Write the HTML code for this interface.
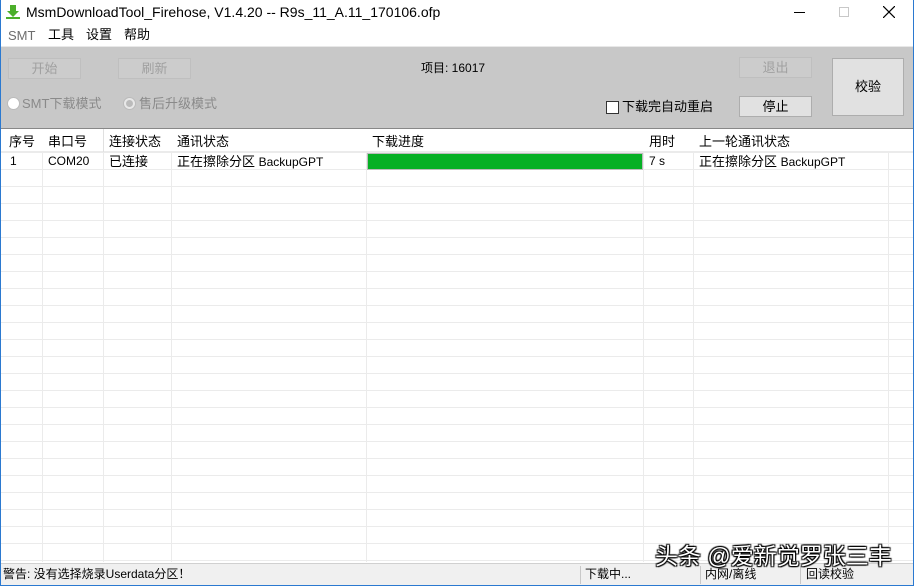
<!DOCTYPE html>
<html><head><meta charset="utf-8"><style>
*{margin:0;padding:0;box-sizing:border-box}
body{width:914px;height:586px;overflow:hidden;background:#fff;font-family:"Liberation Sans","Noto Sans CJK SC",sans-serif;font-size:12px;color:#000;position:relative;line-height:15px}
.win{position:absolute;left:0;top:0;width:914px;height:586px;border:1px solid #2b79d0;border-top:none}
.abs{position:absolute;white-space:nowrap}
.btn{position:absolute;background:#e1e1e1;border:1px solid #adadad;text-align:center;font-size:13px}
.dis{background:#cccccc;border-color:#bfbfbf;color:#a0a0a0}
.tb{position:absolute;left:1px;top:46px;width:912px;height:82px;background:#c8c8c8;border-top:1px solid #e8e8e8}
.grid{position:absolute;left:1px;top:128px;width:912px;height:434px;background:#fff;border-top:1px solid #888;overflow:hidden;
background-image:linear-gradient(#ebebeb 1px,transparent 1px);background-size:100% 17px;background-position:0 23px}
.vl{position:absolute;top:0;width:1px;height:434px;background:#ebebeb}
.cell{position:absolute;font-size:12px;white-space:nowrap}
.status{position:absolute;left:1px;top:563px;width:912px;height:22px;background:#f0f0f0;border-top:1px solid #d0d0d0;font-size:12px}
.status span{position:absolute;top:3px}
.sd{position:absolute;top:2px;width:1px;height:18px;background:#c8c8c8}
</style></head><body>
<div class="win"></div>
<svg class="abs" style="left:5px;top:4px" width="16" height="16" viewBox="0 0 16 16"><path d="M5 1h6v6h3l-6 6-6-6h3z" fill="#4caf2a"/><rect x="1" y="13" width="14" height="2" fill="#4caf2a"/></svg>
<div class="abs" style="left:26px;top:4px;font-size:14px;line-height:17px">MsmDownloadTool_Firehose, V1.4.20 -- R9s_11_A.11_170106.ofp</div>
<div class="abs" style="left:794px;top:12px;width:11px;height:1px;background:#000"></div>
<div class="abs" style="left:839px;top:7px;width:10px;height:10px;border:1px solid #c8c8c8"></div>
<svg class="abs" style="left:883px;top:6px" width="12" height="12"><path d="M0 0L12 12M12 0L0 12" stroke="#000" stroke-width="1.2"/></svg>
<div class="abs" style="left:8px;top:28px;font-size:13px;color:#6d6d6d">SMT</div>
<div class="abs" style="left:48px;top:27px;font-size:13px">工具</div>
<div class="abs" style="left:86px;top:27px;font-size:13px">设置</div>
<div class="abs" style="left:124px;top:27px;font-size:13px">帮助</div>
<div class="tb"></div>
<div class="btn dis" style="left:8px;top:58px;width:73px;height:21px;line-height:19px">开始</div>
<div class="btn dis" style="left:118px;top:58px;width:73px;height:21px;line-height:19px">刷新</div>
<div class="abs" style="left:421px;top:61px;font-size:12px">项目: 16017</div>
<div class="btn dis" style="left:739px;top:57px;width:73px;height:21px;line-height:19px">退出</div>
<div class="btn" style="left:832px;top:58px;width:72px;height:58px;line-height:56px">校验</div>
<div class="btn" style="left:739px;top:96px;width:73px;height:21px;line-height:19px">停止</div>
<div class="abs" style="left:7px;top:97px;width:13px;height:13px;border-radius:50%;background:#fff;border:1px solid #bbb"></div>
<div class="abs" style="left:22px;top:96px;font-size:13px;color:#8a8a8a">SMT下载模式</div>
<div class="abs" style="left:123px;top:97px;width:13px;height:13px;border-radius:50%;background:#e8e8e8;border:1px solid #bbb"><div style="margin:2px;width:7px;height:7px;border-radius:50%;background:#bbb"></div></div>
<div class="abs" style="left:139px;top:96px;font-size:13px;color:#8a8a8a">售后升级模式</div>
<div class="abs" style="left:606px;top:101px;width:13px;height:13px;background:#fff;border:1px solid #333"></div>
<div class="abs" style="left:622px;top:99px;font-size:13px">下载完自动重启</div>
<div class="grid">
<div class="vl" style="left:41px"></div><div class="vl" style="left:102px"></div><div class="vl" style="left:170px"></div><div class="vl" style="left:365px"></div><div class="vl" style="left:642px"></div><div class="vl" style="left:692px"></div><div class="vl" style="left:887px"></div>
<div style="position:absolute;left:0;top:0;width:912px;height:23px;background:#fff;border-bottom:1px solid #ebebeb"></div>
<div class="cell" style="left:8px;top:5px;font-size:13px">序号</div>
<div class="cell" style="left:47px;top:5px;font-size:13px">串口号</div>
<div class="cell" style="left:108px;top:5px;font-size:13px">连接状态</div>
<div class="cell" style="left:176px;top:5px;font-size:13px">通讯状态</div>
<div class="cell" style="left:371px;top:5px;font-size:13px">下载进度</div>
<div class="cell" style="left:648px;top:5px;font-size:13px">用时</div>
<div class="cell" style="left:698px;top:5px;font-size:13px">上一轮通讯状态</div>
<div class="vl" style="left:102px;height:23px;background:#e0e0e0"></div>
<div class="cell" style="left:9px;top:25px">1</div>
<div class="cell" style="left:47px;top:25px">COM20</div>
<div class="cell" style="left:108px;top:25px;font-size:13px">已连接</div>
<div class="cell" style="left:176px;top:25px;font-size:13px">正在擦除分区 <span style="font-size:12px">BackupGPT</span></div>
<div style="position:absolute;left:366px;top:24px;width:276px;height:17px;background:#06b025;border:1px solid #bcbcbc"></div>
<div class="cell" style="left:648px;top:25px">7 s</div>
<div class="cell" style="left:698px;top:25px;font-size:13px">正在擦除分区 <span style="font-size:12px">BackupGPT</span></div>
</div>
<div class="status">
<span style="left:2px">警告: 没有选择烧录Userdata分区！</span>
<div class="sd" style="left:579px"></div><span style="left:584px">下载中...</span>
<div class="sd" style="left:699px"></div><span style="left:704px">内网/离线</span>
<div class="sd" style="left:799px"></div><span style="left:805px">回读校验</span>
</div>
<div class="abs" style="left:655px;top:543px;font-size:23px;line-height:26px;color:#fff;text-shadow:0 0 1px #000,1px 1px 1px #000,-1px -1px 1px #000,1px -1px 1px #000,-1px 1px 1px #000">头条 @爱新觉罗张三丰</div>
</body></html>
